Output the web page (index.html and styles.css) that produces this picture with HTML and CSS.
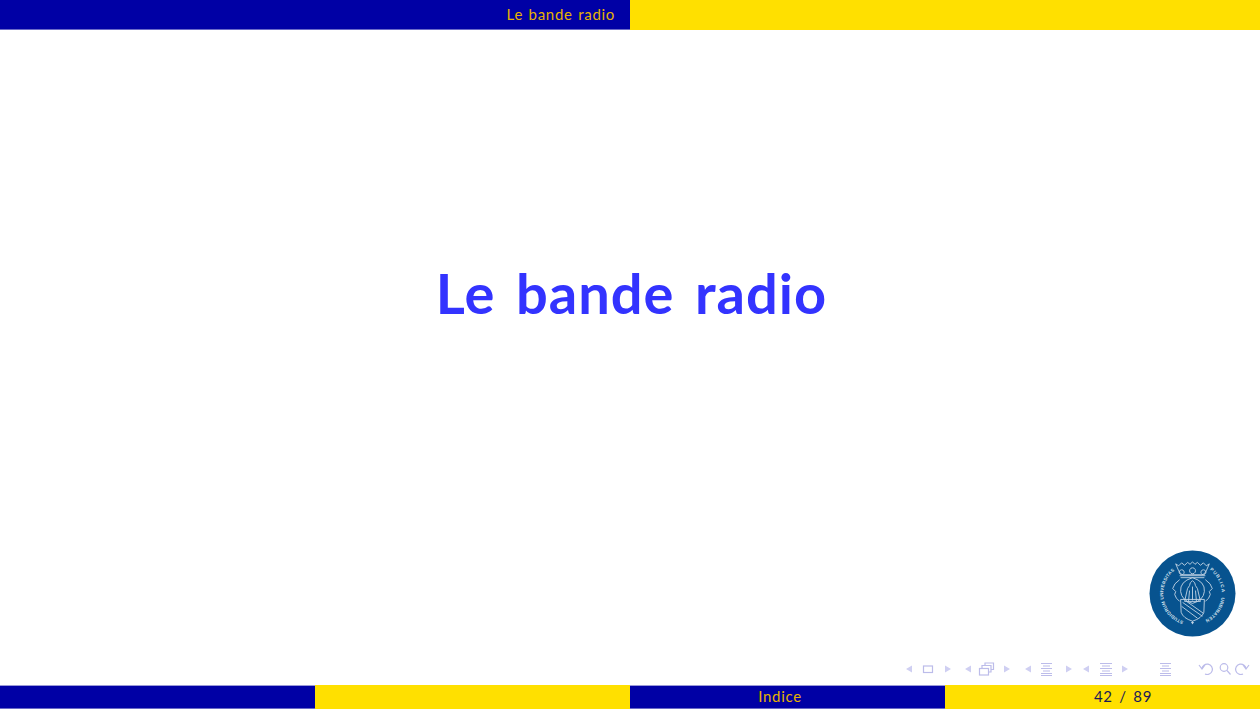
FILE: index.html
```html
<!DOCTYPE html>
<html lang="it">
<head>
<meta charset="utf-8">
<title>Le bande radio</title>
<link rel="stylesheet" href="styles.css">
</head>
<body>
<header class="headline">
  <div class="head-left">Le bande radio</div>
  <div class="head-right"></div>
</header>
<main class="slide">
  <h1 class="title">Le bande radio</h1>
  <div class="logo-row">
    <svg class="logo" viewBox="0 0 88 88" width="87" height="87" aria-label="Logo">
      <defs>
        <path id="ring" d="M 44 73.500 a 29.500 29.500 0 1 1 0 -59 a 29.500 29.500 0 1 1 0 59"/>
      </defs>
      <circle cx="44" cy="44" r="43.500" fill="#07538f"/>
      <g class="seal">
        <path d="M27 14 l3 2 3 -3 3 2.500 3 -3 2.500 2 2.500 -2.500 2.500 2.500 2.500 -2 3 3 3 -2.500 3 3 3 -2 -3 7 q-2 4 -4 4 h-20 q-2 0 -4 -4 z"/>
        <path d="M33 20 a2.500 2.500 0 1 0 0.100 0 M55 20 a2.500 2.500 0 1 0 0.100 0 M44 18 a3 3 0 1 0 0.100 0"/>
        <path d="M31 26 h26 M32 28 h24"/>
        <path d="M31 30 q-6 4 -7 9 l3 3 -1 3 q1 4 5 7 M57 30 q6 4 7 9 l-3 3 1 3 q-1 4 -5 7"/>
        <path d="M44 28 q-13 4 -12 14 q1 9 12 12 q11 -3 12 -12 q1 -10 -12 -14 z"/>
        <path d="M44 31 q3 2 3 5 l2 3 3 13 h-16 l3 -13 2 -3 q0 -3 3 -5 z"/>
        <path d="M44 37 v14 M41 41 l-1 11 M47 41 l1 11"/>
        <path d="M32 50 h24 l-0.500 13 q-2 6 -11.500 9 q-9.500 -3 -11.500 -9 z"/>
        <path class="band" d="M34 53 l20 14 M33 57 l16 12 M38 52 l17 12"/>
        <path d="M44 72 v3 M42.500 73.500 h3"/>
      </g>
      <text class="ring-text ring-left"><textPath href="#ring" startOffset="5%">STUDIORUM UNIVERSITAS</textPath></text>
      <text class="ring-text ring-wide"><textPath href="#ring" startOffset="60%">PUBLICA</textPath></text>
      <text class="ring-text ring-mid"><textPath href="#ring" startOffset="77%">URBINATEN</textPath></text>
    </svg>
  </div>
  <nav class="nav-row" aria-label="Navigazione">
    <svg class="nav-icons" viewBox="0 0 346 16" width="346" height="16">
      <g class="fill">
        <path d="M2 8 l6 -3.500 v7 z"/>
        <path d="M41 4.500 l6 3.500 -6 3.500 z"/>
        <path d="M61 8 l6 -3.500 v7 z"/>
        <path d="M100 4.500 l6 3.500 -6 3.500 z"/>
        <path d="M121 8 l6 -3.500 v7 z"/>
        <path d="M162 4.500 l6 3.500 -6 3.500 z"/>
        <path d="M179 8 l6 -3.500 v7 z"/>
        <path d="M218 4.500 l6 3.500 -6 3.500 z"/>
      </g>
      <g class="line">
        <rect x="19.500" y="5" width="9" height="6.500"/>
        <rect x="75.500" y="7.500" width="9" height="6.500"/>
        <path d="M78 7.500 v-3 h9 v6.500 h-2.500 M81 4.500 v-2.500 h8.500 v6.500 h-2.500"/>
        <path d="M137 2.500 h11 M139 5 h7 M137 7.500 h11 M139 10 h7 M137 12.500 h11 M137 14.500 h11"/>
        <path d="M196 2.500 h12 M198 5 h8 M196 7.500 h12 M198 10 h8 M196 12.500 h12 M196 14.500 h12"/>
        <path d="M256 2.500 h11 M258 5 h7 M256 7.500 h11 M258 10 h7 M256 12.500 h11 M256 14.500 h11"/>
        <path d="M295 4 l3 4 3 -4 M298 8 a5.200 5.200 0 1 1 3 5"/>
        <circle cx="320" cy="6.500" r="3.800"/>
        <path d="M323 9.500 l3.500 4"/>
        <path d="M345 4 l-3 4 -3 -4 M342 8 a5.200 5.200 0 1 0 -3 5"/>
      </g>
    </svg>
  </nav>
</main>
<footer class="footline">
  <div class="foot-cell blue"></div>
  <div class="foot-cell yellow"></div>
  <div class="foot-cell blue foot-title">Indice</div>
  <div class="foot-cell yellow foot-page">42 / 89</div>
</footer>
</body>
</html>
```

FILE: styles.css
```css
html, body {
  margin: 0;
  height: 100%;
}
body {
  display: flex;
  flex-direction: column;
  height: 709px;
  overflow: hidden;
  background: #fff;
  font-family: Lato, "Noto Sans", sans-serif;
}
.headline {
  display: flex;
  height: 30px;
  flex: none;
}
.head-left {
  width: 50%;
  box-sizing: border-box;
  padding-right: 15px;
  background: #0000a5;
  border-bottom: 1px solid #6a6ac8;
  color: #e6b200;
  font-size: 15px;
  letter-spacing: 0.7px;
  word-spacing: 1px;
  line-height: 28px;
  text-align: right;
}
.head-right {
  width: 50%;
  background: #ffe000;
}
.slide {
  flex: 1;
  display: flex;
  flex-direction: column;
  min-height: 0;
}
.title {
  margin: 223px 0 0;
  padding-left: 3px;
  text-align: center;
  color: #3333ff;
  font-size: 56px;
  font-weight: 700;
  line-height: 80px;
  letter-spacing: 1px;
  word-spacing: 6px;
}
.logo-row {
  margin-top: auto;
  display: flex;
  justify-content: flex-end;
  padding-right: 24px;
}
.logo {
  display: block;
}
.seal path {
  fill: none;
  stroke: #c5d6e6;
  stroke-width: 0.9;
}
.ring-text {
  fill: #d5e2ee;
  font-family: "Liberation Sans", sans-serif;
  font-size: 4.600px;
  font-weight: 700;
}
.ring-left {
  letter-spacing: 0.2px;
}
.ring-wide {
  letter-spacing: 1px;
}
.ring-mid {
  letter-spacing: 0.3px;
}
.nav-row {
  display: flex;
  justify-content: flex-end;
  padding: 24px 10px 8px 0;
}
.nav-icons {
  display: block;
}
.nav-icons .fill path {
  fill: #cfcff2;
}
.nav-icons .line rect,
.nav-icons .line path,
.nav-icons .line circle {
  fill: none;
  stroke: #bcbcea;
  stroke-width: 1.2;
}
.footline {
  display: flex;
  height: 24px;
  flex: none;
  font-size: 15px;
  letter-spacing: 0.7px;
  line-height: 21px;
  text-align: center;
}
.foot-cell {
  width: 25%;
  box-sizing: border-box;
}
.blue {
  background: #0000a5;
  border-top: 1px solid #9a9ad8;
  border-bottom: 1px solid #6a6ac8;
}
.yellow {
  background: #ffe000;
}
.foot-title {
  padding-right: 15px;
  color: #e6b200;
}
.foot-page {
  padding-left: 41px;
  line-height: 23px;
  color: #1a1a55;
  word-spacing: 2px;
}
```
